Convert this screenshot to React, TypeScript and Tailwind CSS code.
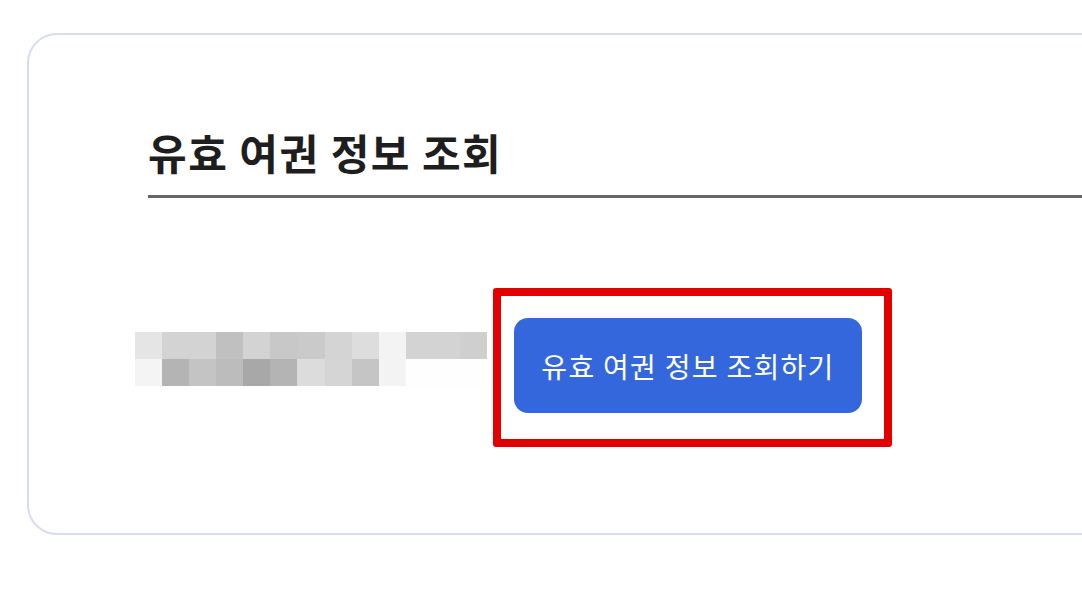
const row1 = [
  "bg-[#e5e5e5]", "bg-[#d3d3d3]", "bg-[#d3d3d3]", "bg-[#c0c0c0]", "bg-[#d3d3d3]", "bg-[#c8c8c8]", "bg-[#cacaca]",
  "bg-[#d4d4d4]", "bg-[#dddddd]", "bg-[#f3f3f3]", "bg-[#d3d3d3]", "bg-[#d3d3d3]", "bg-[#cfcfcf]",
];
const row2 = [
  "bg-[#f4f4f4]", "bg-[#b4b4b4]", "bg-[#c4c4c4]", "bg-[#bcbcbc]", "bg-[#a8a8a8]", "bg-[#b4b4b4]", "bg-[#dcdcdc]",
  "bg-[#d5d5d5]", "bg-[#c5c5c5]", "bg-[#f3f3f3]", "bg-[#fefefe]", "bg-[#fefefe]", "bg-[#fefefe]",
];

function Masked() {
  return (
    <div className="mt-[14px] flex w-[352px] shrink-0 flex-col">
      {[row1, row2].map((row, i) => (
        <div key={i} className="flex h-[27px]">
          {row.map((c, j) => (
            <div key={j} className={`h-full flex-1 ${c}`} />
          ))}
        </div>
      ))}
    </div>
  );
}

export default function App() {
  return (
    <div
      className="min-h-screen w-full overflow-hidden bg-white pl-[27px] pt-[33px]"
      style={{ fontFamily: '"Noto Sans CJK KR", "Noto Sans", sans-serif' }}
    >
      <div className="h-[502px] w-[1100px] rounded-[30px] border-2 border-[#d7dcf2] bg-white pl-[106px] pt-[92px]">
        <div className="ml-[13px] border-b-[3px] border-[#666666] pb-[18px]">
          <h1 className="text-[42px] font-bold leading-[50px] tracking-[1.5px] text-[#1e1e1e]">
            유효 여권 정보 조회
          </h1>
        </div>

        <div className="mt-[120px] flex items-start">
          <Masked />
          <div className="relative ml-[27px]">
            <button className="flex h-[95px] w-[348px] items-center justify-center rounded-[14px] bg-[#3567dc] text-[28px] tracking-[1.3px] text-white">
              유효 여권 정보 조회하기
            </button>
            <div className="pointer-events-none absolute -bottom-[34px] -left-[21px] -right-[30px] -top-[30px] rounded-[3px] border-8 border-[#e30000]" />
          </div>
        </div>
      </div>
    </div>
  );
}
